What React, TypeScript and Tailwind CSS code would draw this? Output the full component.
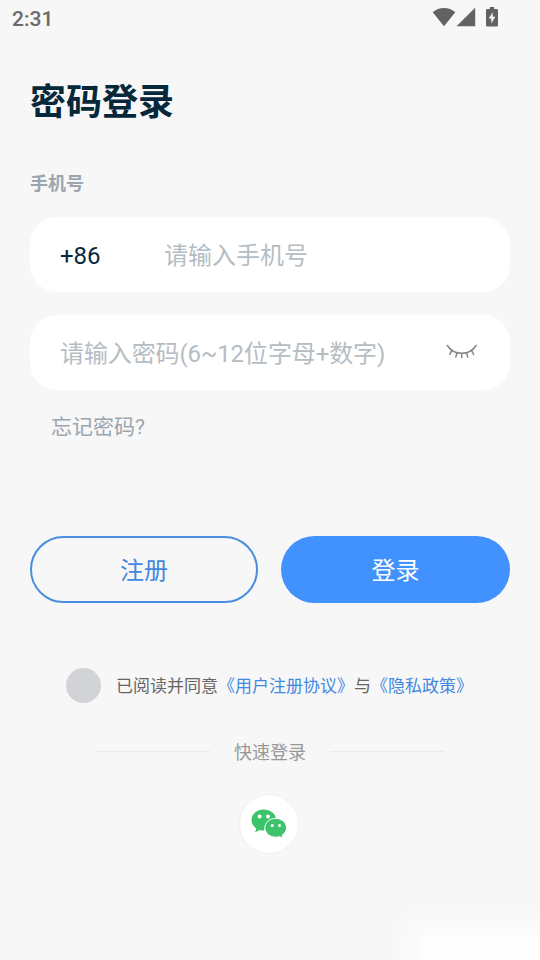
import React from 'react';

const WifiIcon: React.FC = () => (
  <svg width="24" height="20" viewBox="0 0 24 20" fill="currentColor">
    <path d="M0.7 5.2C3.7 2.5 7.8 1 12 1s8.3 1.5 11.3 4.2L12 19.2z" />
  </svg>
);

const SignalIcon: React.FC = () => (
  <svg width="20" height="20" viewBox="0 0 20 20" fill="currentColor">
    <path d="M0.5 19.2H19.2V0.8z" />
  </svg>
);

const BatteryIcon: React.FC = () => (
  <svg width="12" height="20" viewBox="0 0 12 20" fill="currentColor">
    <path
      fillRule="evenodd"
      d="M3.8 0H8.2V2H10.6Q12 2 12 3.4V18.2Q12 19.6 10.6 19.6H1.4Q0 19.6 0 18.2V3.4Q0 2 1.4 2H3.8zM6.7 5.2L2.7 11.6H5.3V16.4L9.3 9.8H6.7z"
    />
  </svg>
);

const ClosedEyeIcon: React.FC = () => (
  <svg
    width="32"
    height="17"
    viewBox="0 0 32 17"
    fill="none"
    stroke="#858585"
    strokeWidth="1.5"
    strokeLinecap="round"
  >
    <path d="M1.3 1.5C4.8 6.8 9.8 9.3 15.7 9.3S26.6 6.8 30.1 1.5" />
    <path d="M5.7 6.5L3.8 10.4M10.9 9L9.8 13M15.7 9.6V13.8M20.5 9L21.8 13M25.6 6.5L27.6 10.4" />
  </svg>
);

const WechatIcon: React.FC = () => (
  <svg width="36" height="30" viewBox="0 0 36 30">
    <path
      fill="#3cc36b"
      d="M12.8 0.5C5.8 0.5 0.5 5.1 0.5 11.1c0 3.5 1.8 6.4 4.8 8.4L4.2 23.3l4.5-2.3c1.6.4 3 .7 4.7.5C13.6 14.5 18.3 9.9 25 9.5 23.9 4.2 18.9 0.5 12.8 0.5z"
    />
    <path
      fill="#3cc36b"
      stroke="#fff"
      strokeWidth="1"
      d="M24.8 9.4c-6.2 0-10.9 4.1-10.9 9.4s4.7 9.4 10.9 9.4c1.3 0 2.6-.2 3.8-.6l3.4 1.9-.9-3.2c2.7-1.8 4.4-4.4 4.4-7.5 0-5.3-4.8-9.4-10.7-9.4z"
    />
    <circle cx="8.6" cy="7.6" r="2" fill="#fff" />
    <circle cx="17" cy="7.6" r="2" fill="#fff" />
    <circle cx="21.2" cy="16.4" r="1.5" fill="#fff" />
    <circle cx="28.5" cy="16.4" r="1.5" fill="#fff" />
  </svg>
);

const App: React.FC = () => {
  return (
    <div
      lang="zh-CN"
      className="relative flex h-[960px] w-[540px] flex-col overflow-hidden bg-[#f7f7f7] font-['Roboto','Noto_Sans_CJK_SC',sans-serif]"
    >
      {/* Status bar */}
      <header className="flex h-9 items-center justify-between pl-3 pr-[42px] text-[#6a6a6a]">
        <span className="pt-0.5 text-[21px] font-medium leading-9">2:31</span>
        <div className="flex items-center pb-0.5 text-[#626262]">
          <WifiIcon />
          <div className="mr-2.5">
            <SignalIcon />
          </div>
          <BatteryIcon />
        </div>
      </header>

      <main className="flex flex-col px-[30px]">
        <h1 className="mt-[41px] h-[52px] text-4xl font-bold leading-[52px] text-[#07283a]">密码登录</h1>
        <p className="mt-[41px] h-7 text-lg font-bold leading-7 text-[#9ba5ae]">手机号</p>

        <div className="mt-[19px] flex h-[75px] items-center rounded-[27px] bg-white px-[30px] pt-0.5 text-2xl">
          <span className="w-[104px] text-[#07283a]">+86</span>
          <span className="text-[#b5bdc3]">请输入手机号</span>
        </div>

        <div className="mt-[23px] flex h-[75px] items-center justify-between rounded-[27px] bg-white pl-[30px] pr-8 text-2xl">
          <span className="pt-0.5 tracking-[-0.1px] text-[#b5bdc3]">请输入密码(6~12位字母+数字)</span>
          <ClosedEyeIcon />
        </div>

        <a className="ml-[21px] mt-[21px] h-8 text-[21px] leading-8 text-[#9ba5ae]">忘记密码?</a>

        <div className="mt-[93px] flex gap-[23px] text-2xl">
          <button className="h-[67px] w-[228px] rounded-full border-2 border-[#4a8fdf] pt-[3px] text-[#4388e0]">
            注册
          </button>
          <button className="h-[67px] flex-1 rounded-full bg-[#4191ff] pt-[3px] text-white">登录</button>
        </div>

        <div className="mt-[65px] flex h-[35px] items-center pl-9 text-[17px] text-[#666]">
          <span className="mr-[15px] size-[35px] rounded-full bg-[#d1d3d7]" />
          <p className="whitespace-nowrap pt-0.5">
            已阅读并同意<span className="text-[#4388e0]">《用户注册协议》</span>与
            <span className="text-[#4388e0]">《隐私政策》</span>
          </p>
        </div>

        <div className="mt-[34px] flex h-7 items-center justify-center gap-6 text-lg text-[#999]">
          <span className="h-px w-[114px] bg-[#e9e9e9]" />
          <span className="pt-1">快速登录</span>
          <span className="h-px w-[114px] bg-[#e9e9e9]" />
        </div>

        <button className="mr-0.5 mt-[29px] flex size-[60px] items-center justify-center self-center rounded-full border border-[#f0f0f0] bg-white">
          <WechatIcon />
        </button>
      </main>

      {/* Soft light patch in the corner */}
      <div className="absolute -bottom-5 -right-5 h-[44px] w-[140px] bg-[#fdfdfd] shadow-[0_0_28px_12px_#fdfdfd]" />
    </div>
  );
};

export default App;
